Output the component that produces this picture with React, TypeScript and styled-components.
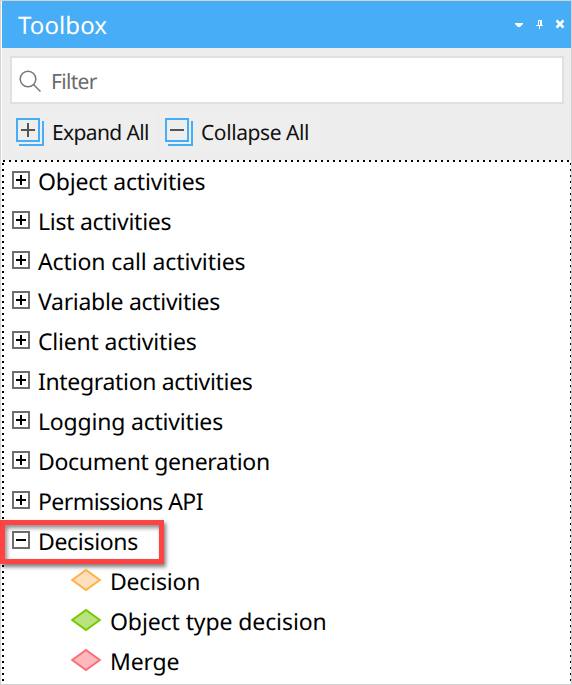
import React from "react";
import styled, { createGlobalStyle } from "styled-components";

const GlobalStyle = createGlobalStyle`
  * { box-sizing: border-box; }
  body { margin: 0; background: #fff; font-family: "Noto Sans", "Segoe UI", sans-serif; color: #000; }
`;

const Panel = styled.main`
  width: 572px;
  height: 685px;
  display: flex;
  flex-direction: column;
  border: 1px solid #d2d2d2;
  padding-left: 1px;
  background: #fff;
`;

const TitleBar = styled.header`
  height: 47px;
  flex: none;
  display: flex;
  align-items: center;
  justify-content: space-between;
  padding: 0 6px 0 16px;
  background: #47adf7;
  color: #fff;
  > span { padding-top: 2px; }
`;

const Label = styled.span<{ $size?: number; $spacing?: number }>`
  font-size: ${(p) => p.$size ?? 23}px;
  letter-spacing: ${(p) => p.$spacing ?? 0}px;
  line-height: 40px;
  white-space: pre;
  text-rendering: geometricPrecision;
`;

const WindowControls = styled.div`
  display: flex;
  height: 47px;
  svg { display: block; }
`;

const Tools = styled.section`
  height: 112px;
  flex: none;
  padding: 8px 7px 0 8px;
  background: #ededed;
`;

const FilterBox = styled.div`
  height: 48px;
  display: flex;
  align-items: center;
  border: 2px solid #e0e0e0;
  background: #fff;
  color: #6b6b6b;
  padding: 2px 0 0 7px;
  gap: 9px;
  span { padding-top: 2px; }
`;

const ButtonRow = styled.div`
  display: flex;
  padding: 8px 0 0 1px;
  gap: 4px;
`;

const ToolButton = styled.button<{ $width: number }>`
  width: ${(p) => p.$width}px;
  height: 40px;
  display: flex;
  align-items: center;
  gap: 8px;
  padding: 0 0 0 5px;
  border: 0;
  background: #eee;
  color: #111;
  font-family: inherit;
  svg { flex: none; }
  span { height: 40px; line-height: 43px; }
`;

const Tree = styled.section`
  flex: 1;
  min-height: 0;
  padding: 1px 0 0 10px;
  background:
    repeating-linear-gradient(90deg, #000 0 2px, transparent 2px 6px) 1px 0 / 100% 2px no-repeat,
    repeating-linear-gradient(180deg, #000 0 2px, transparent 2px 6px) 0 3px / 2px 100% no-repeat,
    repeating-linear-gradient(180deg, #000 0 2px, transparent 2px 6px) 100% 3px / 1px 100% no-repeat,
    #fff;
`;

const Row = styled.div<{ $child?: boolean }>`
  position: relative;
  height: 40px;
  display: flex;
  align-items: center;
  gap: 8px;
  padding-left: ${(p) => (p.$child ? 58 : 0)}px;
  svg { flex: none; display: block; margin-top: -3px; }
`;

const Highlight = styled.div`
  position: absolute;
  left: -12px;
  top: -1px;
  width: 164px;
  height: 44px;
  border: 5px solid #ff4343;
  box-shadow: 2px 3px 4px rgba(0, 0, 0, 0.5), inset 2px 3px 4px rgba(0, 0, 0, 0.45);
  pointer-events: none;
`;

const Toggle = ({ open }: { open?: boolean }) => (
  <svg width="18" height="18" shapeRendering="crispEdges">
    <rect x="1" y="1" width="16" height="16" fill="#fff" stroke="#6d6d6d" strokeWidth="2" />
    <path d={open ? "M4 9H14" : "M4 9H14M9 4V14"} stroke="#000" strokeWidth="2" />
  </svg>
);

const Stack = ({ plus }: { plus?: boolean }) => (
  <svg width="28" height="28" fill="none">
    <path d="M27 3V27H3" stroke="#47adf7" strokeWidth="2" />
    <rect x="1" y="1" width="22" height="22" stroke="#47adf7" strokeWidth="2" />
    <path d={plus ? "M5 12H19M12 5V19" : "M5 12H19"} stroke="#555" strokeWidth="2" />
  </svg>
);

const Diamond = ({ fill, stroke }: { fill: string; stroke: string }) => (
  <svg width="32" height="24">
    <path d="M2.2 12L16 2L29.8 12L16 22Z" fill={fill} stroke={stroke} strokeWidth="2" />
  </svg>
);

const groups: [string, number][] = [
  ["Object activities", -0.17],
  ["List activities", -0.27],
  ["Action call activities", -0.11],
  ["Variable activities", -0.3],
  ["Client activities", -0.2],
  ["Integration activities", -0.33],
  ["Logging activities", -0.2],
  ["Document generation", -0.3],
  ["Permissions API", -0.56],
];

const decisions: [string, number, string, string][] = [
  ["Decision", -0.2, "#ffe0bd", "#ffb04a"],
  ["Object type decision", -0.1, "#b9e37d", "#76c800"],
  ["Merge", -0.2, "#ffb9bd", "#fb6e78"],
];

export default function App() {
  return (
    <>
      <GlobalStyle />
      <Panel>
        <TitleBar>
          <Label $size={24} $spacing={0.1}>Toolbox</Label>
          <WindowControls>
            <svg width="50" height="47" fill="none">
              <path d="M0 22H8V23L5 26H3L0 23Z" fill="#fff" />
              <path d="M23.5 24V19.5H26.5V24M21 24.5H28M24.5 25V28" stroke="#fff" />
              <path d="M26 19V24" stroke="#fff" strokeWidth="2" />
              <path d="M41.5 19.5L48.5 26.5M48.5 19.5L41.5 26.5" stroke="#fff" strokeWidth="2.5" />
            </svg>
          </WindowControls>
        </TitleBar>
        <Tools>
          <FilterBox>
            <svg width="23" height="23" fill="none" stroke="#777" strokeWidth="1.5">
              <circle cx="9" cy="9" r="7.8" />
              <path d="M14.5 14.5L21.5 21.5" />
            </svg>
            <Label $size={21} $spacing={-0.7}>Filter</Label>
          </FilterBox>
          <ButtonRow>
            <ToolButton $width={145}>
              <Stack plus />
              <Label $size={21} $spacing={-0.62}>Expand All</Label>
            </ToolButton>
            <ToolButton $width={158}>
              <Stack />
              <Label $size={21} $spacing={-0.42}>Collapse All</Label>
            </ToolButton>
          </ButtonRow>
        </Tools>
        <Tree>
          {groups.map(([name, spacing]) => (
            <Row key={name}>
              <Toggle />
              <Label $spacing={spacing}>{name}</Label>
            </Row>
          ))}
          <Row>
            <Toggle open />
            <Label $spacing={-0.32}>Decisions</Label>
            <Highlight />
          </Row>
          {decisions.map(([name, spacing, fill, stroke]) => (
            <Row $child key={name}>
              <Diamond fill={fill} stroke={stroke} />
              <Label $spacing={spacing}>{name}</Label>
            </Row>
          ))}
        </Tree>
      </Panel>
    </>
  );
}
